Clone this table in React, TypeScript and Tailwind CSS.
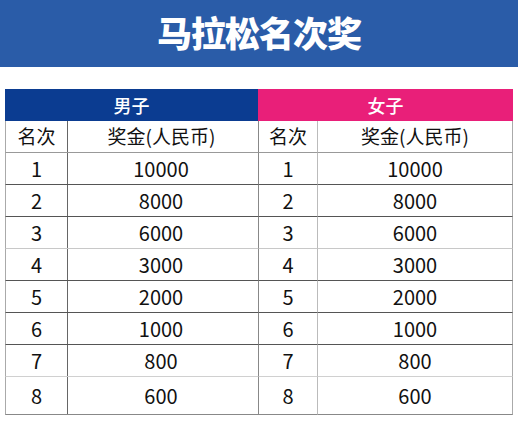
import React from 'react';

const rows = [
  { rank: '1', prize: '10000' },
  { rank: '2', prize: '8000' },
  { rank: '3', prize: '6000' },
  { rank: '4', prize: '3000' },
  { rank: '5', prize: '2000' },
  { rank: '6', prize: '1000' },
  { rank: '7', prize: '800' },
  { rank: '8', prize: '600' },
];

// bottom line colours per row, the jpeg shows them uneven
const lineColors = [
  'border-[#555]',
  'border-[#555]',
  'border-[#c8c8c8]',
  'border-[#555]',
  'border-[#555]',
  'border-[#555]',
  'border-[#d0d0d0]',
  'border-[#888]',
];

const font = { fontFamily: '"Noto Sans CJK SC", "Noto Sans", sans-serif' };

const App = () => {
  return (
    <div className="w-[518px] h-[422px] bg-white overflow-hidden" style={font}>
      <div className="h-[67px] bg-[#2a5ca8] flex items-center justify-center">
        <h1 className="text-white text-[35px] font-black tracking-[-1px] leading-none -mt-[4px]">
          马拉松名次奖
        </h1>
      </div>

      <div className="mt-[22px] ml-[5px] w-[508px] grid grid-cols-[63px_190px_60px_195px] text-[#111]">
        <div className="col-span-2 h-[32px] bg-[#0b3c91] text-white text-[18px] font-medium flex items-center justify-center">
          男子
        </div>
        <div className="col-span-2 h-[32px] bg-[#e91f79] text-white text-[18px] font-medium flex items-center justify-center">
          女子
        </div>

        <div className="h-[32px] border-l border-b border-r border-l-[#aaa] border-b-[#999] border-r-[#666] text-[19px] flex items-center justify-center">
          名次
        </div>
        <div className="h-[32px] border-b border-b-[#999] text-[19px] flex items-center justify-center -ml-[3px]">
          奖金(人民币)
        </div>
        <div className="h-[32px] border-l border-b border-r border-l-[#888] border-b-[#999] border-r-[#bbb] text-[19px] flex items-center justify-center">
          名次
        </div>
        <div className="h-[32px] border-b border-r border-b-[#999] border-r-[#aaa] text-[19px] flex items-center justify-center">
          奖金(人民币)
        </div>

        {rows.map((r, i) => {
          const h = i === rows.length - 1 ? 'h-[38px]' : 'h-[32px]';
          const line = lineColors[i];
          return (
            <React.Fragment key={r.rank}>
              <div className={`${h} border-l border-b border-r border-l-[#aaa] border-r-[#666] ${line} text-[20px] flex items-center justify-center`}>
                {r.rank}
              </div>
              <div className={`${h} border-b ${line} text-[20px] flex items-center justify-center -ml-[4px]`}>
                {r.prize}
              </div>
              <div className={`${h} border-l border-b border-r border-l-[#888] border-r-[#bbb] ${line} text-[20px] flex items-center justify-center`}>
                {r.rank}
              </div>
              <div className={`${h} border-b border-r border-r-[#aaa] ${line} text-[20px] flex items-center justify-center`}>
                {r.prize}
              </div>
            </React.Fragment>
          );
        })}
      </div>
    </div>
  );
};

export default App;
